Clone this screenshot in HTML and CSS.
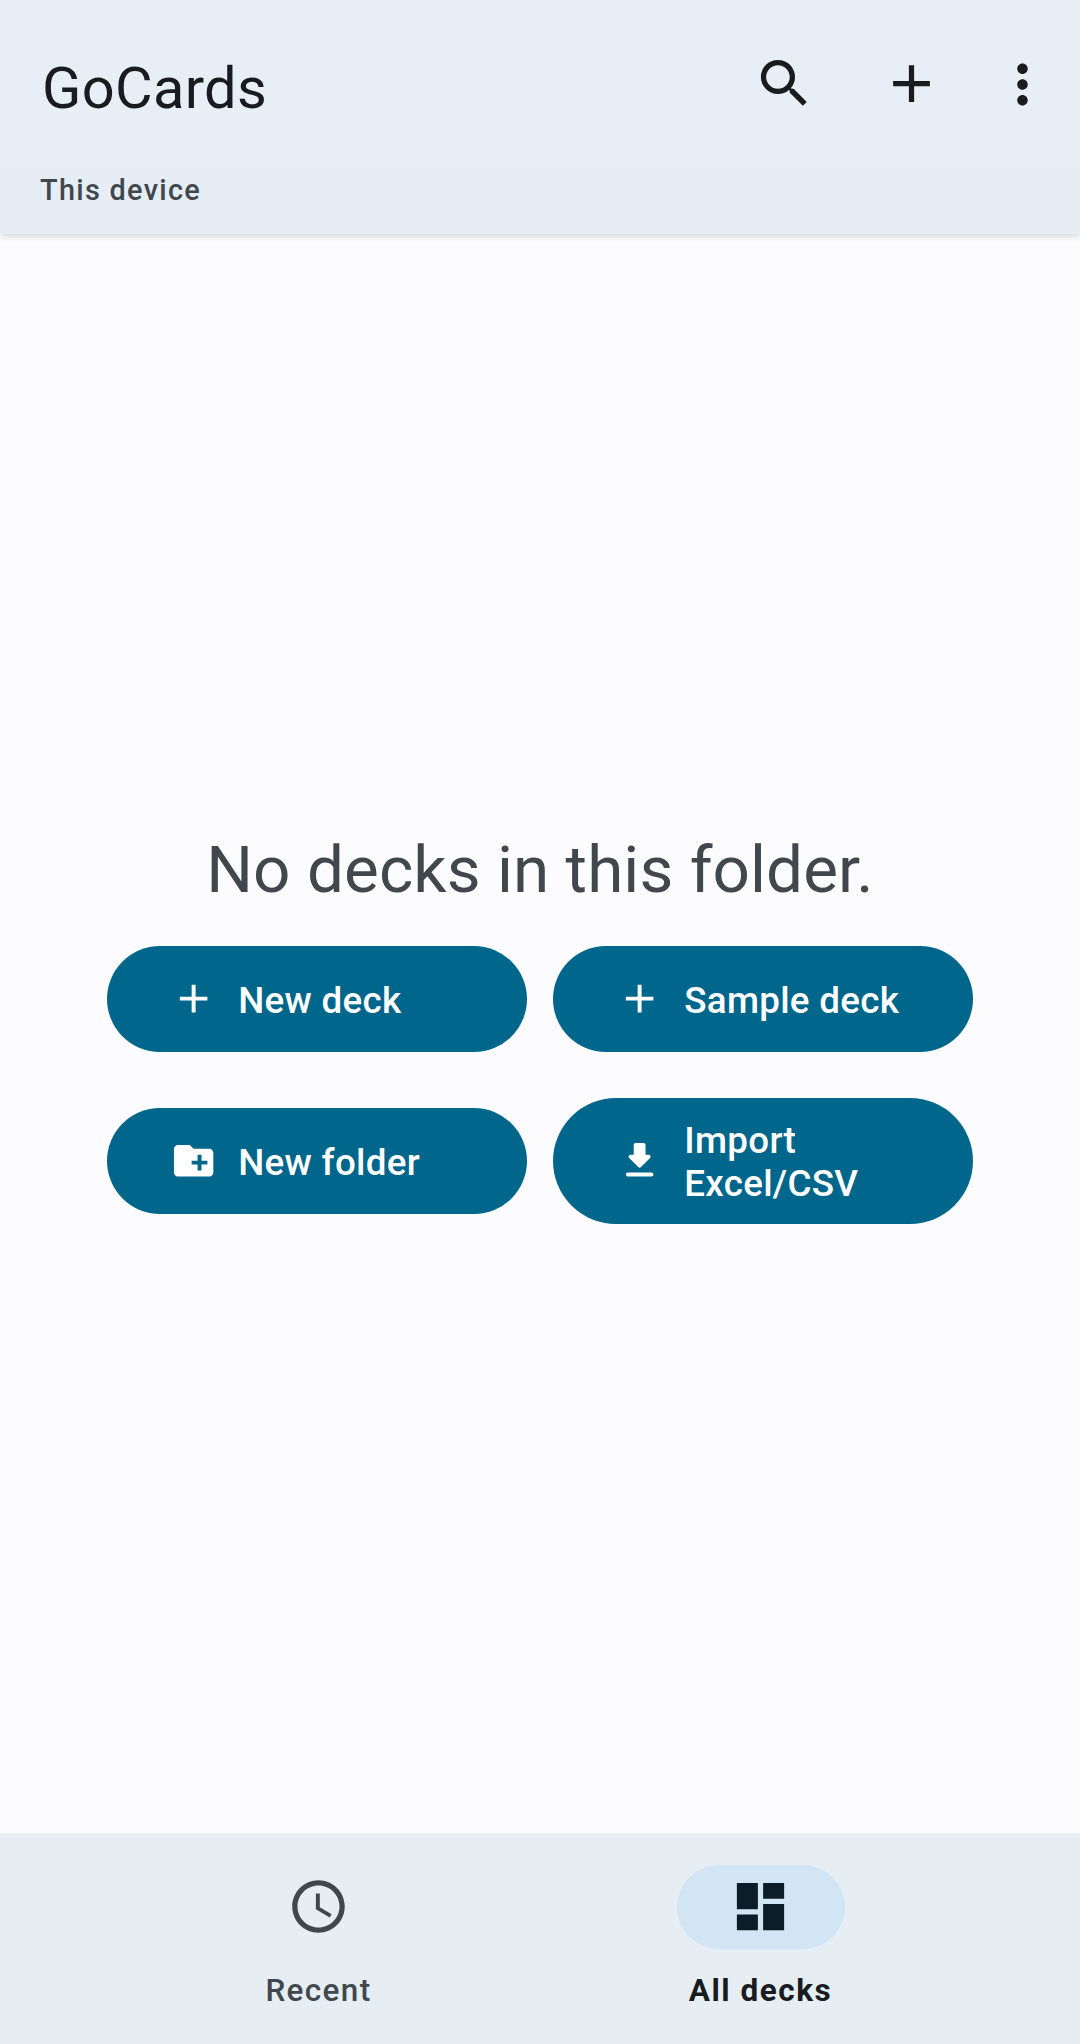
FILE: index.html
```html
<!DOCTYPE html>
<html lang="en">
<head>
<meta charset="utf-8">
<title>GoCards</title>
<link rel="stylesheet" href="styles.css">
</head>
<body>
<div class="app">
  <header class="header">
    <div class="toolbar">
      <h1 class="title">GoCards</h1>
      <div class="actions">
        <svg class="icon" viewBox="0 0 24 24"><path d="M15.5 14h-.79l-.28-.27A6.471 6.471 0 0 0 16 9.5 6.5 6.5 0 1 0 9.5 16c1.61 0 3.09-.59 4.23-1.57l.27.28v.79l5 4.99L20.49 19l-4.99-5zm-6 0C7.01 14 5 11.99 5 9.5S7.01 5 9.5 5 14 7.01 14 9.5 11.99 14 9.5 14z"/></svg>
        <svg class="icon icon-add" viewBox="0 0 24 24"><path d="M19 13h-6v6h-2v-6H5v-2h6V5h2v6h6v2z"/></svg>
        <svg class="icon icon-more" viewBox="0 0 24 24"><path d="M12 8c1.1 0 2-.9 2-2s-.9-2-2-2-2 .9-2 2 .9 2 2 2zm0 2c-1.1 0-2 .9-2 2s.9 2 2 2 2-.9 2-2-.9-2-2-2zm0 6c-1.1 0-2 .9-2 2s.9 2 2 2 2-.9 2-2-.9-2-2-2z"/></svg>
      </div>
    </div>
    <div class="location">This device</div>
  </header>
  <main class="content">
    <h2 class="empty">No decks in this folder.</h2>
    <div class="buttons">
      <button class="button"><svg class="button-icon" viewBox="0 0 24 24"><path d="M19 13h-6v6h-2v-6H5v-2h6V5h2v6h6v2z"/></svg><span>New deck</span></button>
      <button class="button"><svg class="button-icon" viewBox="0 0 24 24"><path d="M19 13h-6v6h-2v-6H5v-2h6V5h2v6h6v2z"/></svg><span>Sample deck</span></button>
      <button class="button"><svg class="button-icon" viewBox="0 0 24 24"><path d="M20 6h-8l-2-2H4c-1.11 0-1.99.89-1.99 2L2 18c0 1.11.89 2 2 2h16c1.11 0 2-.89 2-2V8c0-1.11-.89-2-2-2zm-1 8h-3v3h-2v-3h-3v-2h3V9h2v3h3v2z"/></svg><span>New folder</span></button>
      <button class="button"><svg class="button-icon" viewBox="0 0 24 24"><path d="M16.59 9H15V4c0-.55-.45-1-1-1h-4c-.55 0-1 .45-1 1v5H7.41c-.89 0-1.34 1.08-.71 1.71l4.59 4.59c.39.39 1.02.39 1.41 0l4.59-4.59c.63-.63.19-1.71-.7-1.71zM5 19c0 .55.45 1 1 1h12c.55 0 1-.45 1-1s-.45-1-1-1H6c-.55 0-1 .45-1 1z"/></svg><span>Import Excel/CSV</span></button>
    </div>
  </main>
  <nav class="nav">
    <div class="tab">
      <div class="pill"><svg class="icon" viewBox="0 0 24 24"><path d="M11.99 2C6.47 2 2 6.48 2 12s4.47 10 9.99 10C17.52 22 22 17.52 22 12S17.52 2 11.99 2zM12 20c-4.42 0-8-3.58-8-8s3.58-8 8-8 8 3.58 8 8-3.58 8-8 8zm.5-13H11v6l5.25 3.15.75-1.23-4.5-2.67z"/></svg></div>
      <span class="label">Recent</span>
    </div>
    <div class="tab active">
      <div class="pill"><svg class="icon" viewBox="0 0 24 24"><path d="M3 13h8V3H3v10zm0 8h8v-6H3v6zm10 0h8V11h-8v10zm0-18v6h8V3h-8z"/></svg></div>
      <span class="label">All decks</span>
    </div>
  </nav>
</div>
</body>
</html>
```
FILE: styles.css
```css
* { box-sizing: border-box; }

body {
  margin: 0;
  font-family: Roboto, "Liberation Sans", sans-serif;
  background: #fcfcff;
}

.app {
  display: flex;
  flex-direction: column;
  height: 2044px;
}

.header {
  height: 234px;
  background: #e6edf5;
  box-shadow: 0 2px 7px rgba(0, 0, 0, 0.16);
}

.toolbar {
  display: flex;
  justify-content: space-between;
  height: 168px;
  padding: 52px 26px 0 42px;
  background: #e7eef5;
  color: #191c1e;
}

.title {
  margin: 2px 0 0;
  font-size: 57.75px;
  font-weight: 400;
  line-height: 68px;
  letter-spacing: 0.35px;
}

.actions { display: flex; }

.icon {
  display: block;
  width: 63px;
  height: 63px;
  fill: currentColor;
}

.icon-add { margin-left: 64px; }
.icon-more { margin: 1px 0 0 48px; }

.location {
  padding: 5px 0 0 40px;
  font-size: 28.875px;
  font-weight: 500;
  line-height: 34px;
  letter-spacing: 1.3px;
  color: #40484d;
}

.content {
  flex: 1;
  display: flex;
  flex-direction: column;
  align-items: center;
  padding-top: 597px;
}

.empty {
  margin: 0 0 37px;
  font-size: 65.6px;
  font-weight: 400;
  line-height: 78px;
  letter-spacing: 0.08px;
  color: #40484d;
}

.buttons {
  display: grid;
  grid-template-columns: 420px 420px;
  column-gap: 26px;
  row-gap: 46px;
  align-items: center;
}

.button {
  display: flex;
  align-items: center;
  gap: 21px;
  min-height: 106px;
  padding: 19px 63px;
  border: 0;
  border-radius: 63px;
  background: #00668b;
  color: #fff;
  font: 500 36.75px/43px Roboto, "Liberation Sans", sans-serif;
  letter-spacing: 0.3px;
  text-align: left;
}

.button span { padding-top: 2px; }

.button-icon {
  flex: none;
  width: 47.25px;
  height: 47.25px;
  fill: currentColor;
}

.nav {
  display: flex;
  justify-content: center;
  height: 211px;
  padding: 32px 1px 0 0;
  background: #e6eef4;
  color: #40484d;
}

.tab {
  display: flex;
  flex-direction: column;
  align-items: center;
  width: 442px;
}

.pill {
  display: flex;
  align-items: center;
  justify-content: center;
  width: 168px;
  height: 84px;
  padding: 0 1px 1px 0;
  border-radius: 42px;
}

.label {
  margin-top: 23px;
  font-size: 31.5px;
  font-weight: 500;
  line-height: 37px;
  letter-spacing: 1.35px;
}

.active { color: #191c1e; }
.active .pill { background: #d1e5f4; color: #0b1d28; }
.active .label { font-weight: 700; letter-spacing: 1.5px; }
```
